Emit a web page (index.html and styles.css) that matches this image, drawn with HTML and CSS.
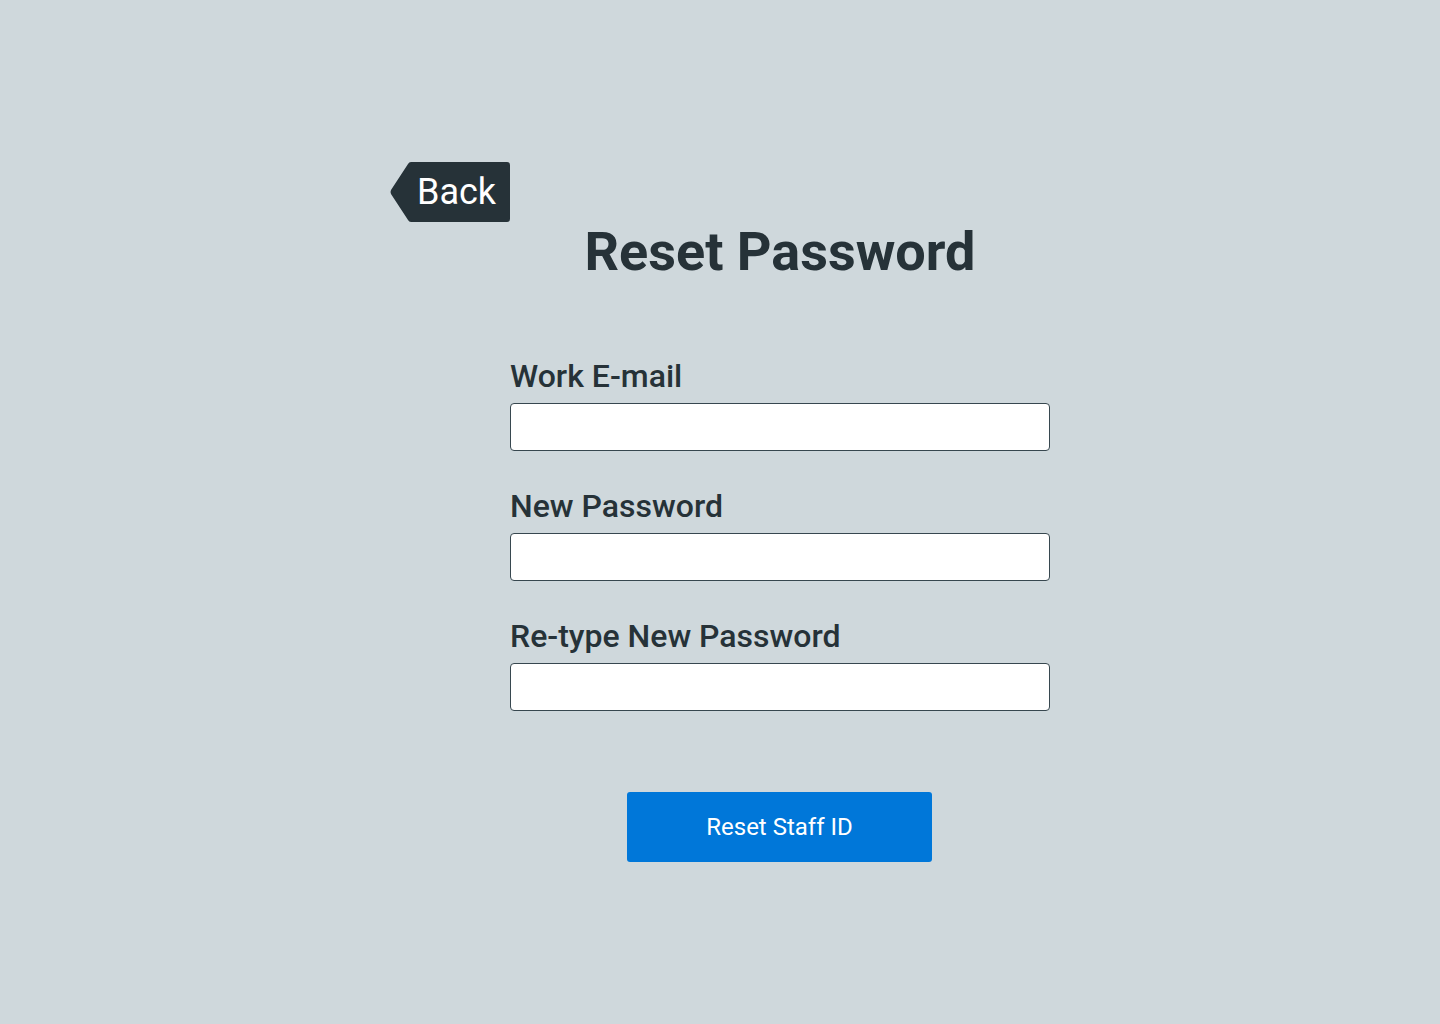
FILE: index.html
```html
<!DOCTYPE html>
<html lang="en">
<head>
<meta charset="utf-8">
<title>Reset Password</title>
<link rel="stylesheet" href="styles.css">
</head>
<body>
<main class="page">
  <a class="back" href="#">Back</a>
  <h1 class="title">Reset Password</h1>
  <form class="form">
    <label class="field">
      <span class="label">Work E-mail</span>
      <input class="input" type="email">
    </label>
    <label class="field">
      <span class="label">New Password</span>
      <input class="input" type="password">
    </label>
    <label class="field">
      <span class="label">Re-type New Password</span>
      <input class="input" type="password">
    </label>
    <button class="submit" type="button">Reset Staff ID</button>
  </form>
</main>
</body>
</html>
```
FILE: styles.css
```css
* { box-sizing: border-box; }
html, body { margin: 0; height: 100%; }
body {
  background: #cfd8dc;
  font-family: Roboto, "Noto Sans", sans-serif;
  color: #263238;
}
.page {
  width: 780px;
  margin-left: 390px;
  padding-top: 162px;
  display: flex;
  flex-direction: column;
}
.back {
  align-self: flex-start;
  height: 60px;
  width: 120px;
  background: #263238;
  color: #fff;
  text-decoration: none;
  font-size: 36px;
  line-height: 60px;
  padding-left: 27px;
  clip-path: path("M 21 0 H 117 Q 120 0 120 3 V 57 Q 120 60 117 60 H 21 Q 19 60 18 58 L 1 32 Q 0 30 1 28 L 18 2 Q 19 0 21 0 Z");
}
.title {
  margin: 0;
  text-align: center;
  font-size: 54px;
  font-weight: 700;
  line-height: 60px;
}
.form {
  width: 540px;
  align-self: center;
  margin-top: 74px;
  display: flex;
  flex-direction: column;
}
.field {
  display: flex;
  flex-direction: column;
  margin-bottom: 35px;
}
.label {
  font-size: 32px;
  font-weight: 500;
  line-height: 40px;
  margin-bottom: 7px;
}
.input {
  height: 48px;
  width: 540px;
  border: 1px solid #37474f;
  border-radius: 4px;
  background: #fff;
  font: inherit;
  font-size: 20px;
  padding: 0 12px;
}
.submit {
  align-self: center;
  margin-top: 46px;
  margin-right: 1px;
  width: 305px;
  height: 70px;
  border: 0;
  border-radius: 3px;
  background: #0077d9;
  color: #fff;
  font-family: Roboto, sans-serif;
  font-size: 24px;
}
```
